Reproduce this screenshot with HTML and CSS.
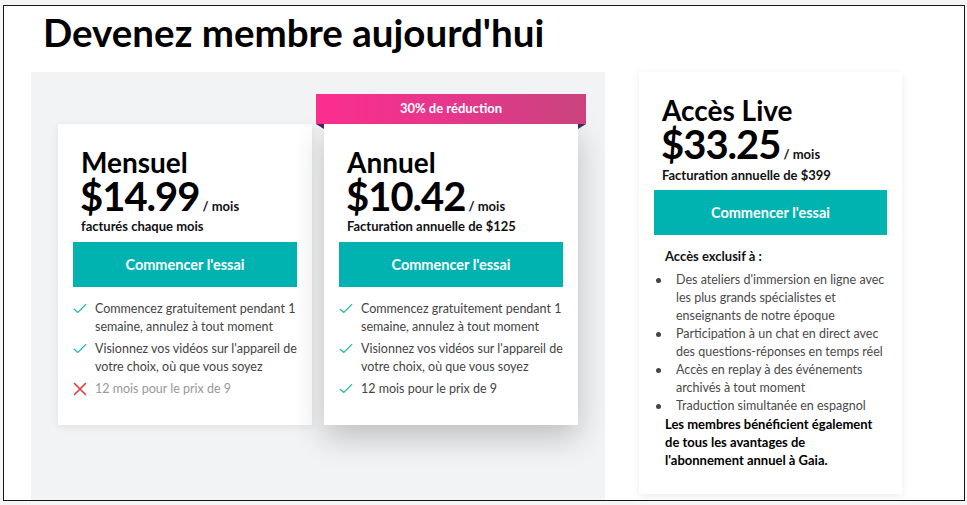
FILE: index.html
```html
<!DOCTYPE html>
<html lang="fr">
<head>
<meta charset="utf-8">
<title>Devenez membre aujourd'hui</title>
<link rel="stylesheet" href="styles.css">
</head>
<body>
<div class="frame">
  <h1 class="title">Devenez membre aujourd'hui</h1>
  <div class="row">
    <div class="panel">
      <div class="card">
        <h2 class="plan">Mensuel</h2>
        <div class="price"><span class="amount">$14.99</span><span class="per">/ mois</span></div>
        <p class="billing">facturés chaque mois</p>
        <a class="btn" href="#">Commencer l'essai</a>
        <ul class="features">
          <li><svg class="ic" viewBox="0 0 16 12"><path d="M1 6.5 L5.5 10.5 L15 1" fill="none" stroke="#1db5b1" stroke-width="1.4"/></svg><span>Commencez gratuitement pendant 1 semaine, annulez à tout moment</span></li>
          <li><svg class="ic" viewBox="0 0 16 12"><path d="M1 6.5 L5.5 10.5 L15 1" fill="none" stroke="#1db5b1" stroke-width="1.4"/></svg><span>Visionnez vos vidéos sur l'appareil de votre choix, où que vous soyez</span></li>
          <li class="off"><svg class="ic x" viewBox="0 0 14 14"><path d="M1 1 L13 13 M13 1 L1 13" fill="none" stroke="#e8383d" stroke-width="1.6"/></svg><span>12 mois pour le prix de 9</span></li>
        </ul>
      </div>
      <div class="card featured">
        <div class="ribbon">30% de réduction</div>
        <h2 class="plan">Annuel</h2>
        <div class="price"><span class="amount">$10.42</span><span class="per">/ mois</span></div>
        <p class="billing">Facturation annuelle de $125</p>
        <a class="btn" href="#">Commencer l'essai</a>
        <ul class="features">
          <li><svg class="ic" viewBox="0 0 16 12"><path d="M1 6.5 L5.5 10.5 L15 1" fill="none" stroke="#1db5b1" stroke-width="1.4"/></svg><span>Commencez gratuitement pendant 1 semaine, annulez à tout moment</span></li>
          <li><svg class="ic" viewBox="0 0 16 12"><path d="M1 6.5 L5.5 10.5 L15 1" fill="none" stroke="#1db5b1" stroke-width="1.4"/></svg><span>Visionnez vos vidéos sur l'appareil de votre choix, où que vous soyez</span></li>
          <li><svg class="ic" viewBox="0 0 16 12"><path d="M1 6.5 L5.5 10.5 L15 1" fill="none" stroke="#1db5b1" stroke-width="1.4"/></svg><span>12 mois pour le prix de 9</span></li>
        </ul>
      </div>
    </div>
    <div class="card live">
      <h2 class="plan">Accès Live</h2>
      <div class="price"><span class="amount">$33.25</span><span class="per">/ mois</span></div>
      <p class="billing">Facturation annuelle de $399</p>
      <a class="btn" href="#">Commencer l'essai</a>
      <p class="excl">Accès exclusif à :</p>
      <ul class="bullets">
        <li>Des ateliers d'immersion en ligne avec les plus grands spécialistes et enseignants de notre époque</li>
        <li>Participation à un chat en direct avec des questions-réponses en temps réel</li>
        <li>Accès en replay à des événements archivés à tout moment</li>
        <li>Traduction simultanée en espagnol</li>
      </ul>
      <p class="note">Les membres bénéficient également de tous les avantages de l'abonnement annuel à Gaia.</p>
    </div>
  </div>
</div>
</body>
</html>
```
FILE: styles.css
```css
* { box-sizing: border-box; }
html, body { margin: 0; padding: 0; }
body {
  background: #f5f5f5;
  font-family: "Lato", "Noto Sans", sans-serif;
  color: #111;
}
.frame {
  margin: 5px 2px 0 3px;
  width: 962px;
  height: 496px;
  border: 1px solid #15171a;
  background: #fff;
  overflow: hidden;
}
.title {
  margin: 0;
  padding: 1px 0 0 39px;
  height: 66px;
  font-size: 38.5px;
  font-weight: 700;
  line-height: 50px;
  color: #000;
}
.row {
  display: flex;
  align-items: flex-start;
  gap: 34px;
  padding-left: 27px;
}
.panel {
  width: 574px;
  height: 428px;
  background: #f2f3f5;
  display: flex;
  align-items: flex-start;
  gap: 12px;
  padding: 52px 0 0 27px;
}
.card {
  position: relative;
  width: 254px;
  height: 301px;
  background: #fff;
  padding: 22px 15px 0;
  box-shadow: 0 2px 8px rgba(0,0,0,0.08);
}
.card.featured {
  box-shadow: 0 12px 30px rgba(0,0,0,0.22);
}
.ribbon {
  position: absolute;
  left: -8px;
  right: -8px;
  top: -30px;
  height: 30px;
  background: linear-gradient(90deg, #fb2e8e 0%, #e6368b 50%, #c9447f 100%);
  color: #fff;
  font-size: 13px;
  font-weight: 700;
  line-height: 29px;
  text-align: center;
}
.ribbon::before, .ribbon::after {
  content: "";
  position: absolute;
  top: 30px;
  width: 0;
  height: 0;
  border-top: 5px solid #4a2460;
}
.ribbon::before { left: 0; border-left: 8px solid transparent; }
.ribbon::after { right: 0; border-right: 8px solid transparent; }
.plan {
  margin: 0 0 0 8px;
  font-size: 28px;
  font-weight: 700;
  line-height: 32px;
  color: #000;
}
.price {
  margin-left: 7px;
  display: flex;
  align-items: baseline;
  gap: 3px;
  height: 36px;
}
.amount {
  font-size: 40px;
  font-weight: 700;
  letter-spacing: -1px;
  line-height: 36px;
  color: #000;
}
.per {
  font-size: 13px;
  font-weight: 700;
  line-height: 13px;
}
.billing {
  margin: 3px 0 0 8px;
  font-size: 13px;
  font-weight: 700;
  line-height: 18px;
}
.card.live .billing { margin-top: 4px; }
.btn {
  display: block;
  margin-top: 7px;
  height: 45px;
  background: #00b3b0;
  color: #fff;
  text-decoration: none;
  text-align: center;
  font-size: 14.5px;
  font-weight: 700;
  line-height: 45px;
}
.card.live .btn { margin-top: 6px; }
.features {
  list-style: none;
  margin: 13px -4px 0 0;
  padding: 0;
  font-size: 12.5px;
  line-height: 18px;
  color: #444;
}
.features li {
  display: flex;
  gap: 8px;
  margin-bottom: 4px;
}
.features li.off { color: #999; }
.ic {
  flex: none;
  width: 14px;
  height: 11px;
  margin-top: 3px;
}
.ic.x { width: 14px; height: 14px; margin-top: 2px; }
.card.live {
  width: 263px;
  height: 422px;
}
.excl {
  margin: 12px 0 0 11px;
  font-size: 13px;
  font-weight: 700;
  line-height: 18px;
}
.bullets {
  list-style: none;
  margin: 6px -4px 0 0;
  padding: 0 0 0 22px;
  font-size: 12.5px;
  line-height: 18px;
  color: #4a4a4a;
}
.bullets li { position: relative; }
.bullets li::before {
  content: "";
  position: absolute;
  left: -20px;
  top: 7px;
  width: 5px;
  height: 5px;
  border-radius: 50%;
  background: #444;
}
.note {
  margin: 0 12px 0 11px;
  font-size: 13px;
  font-weight: 700;
  line-height: 18px;
  color: #000;
}
```
